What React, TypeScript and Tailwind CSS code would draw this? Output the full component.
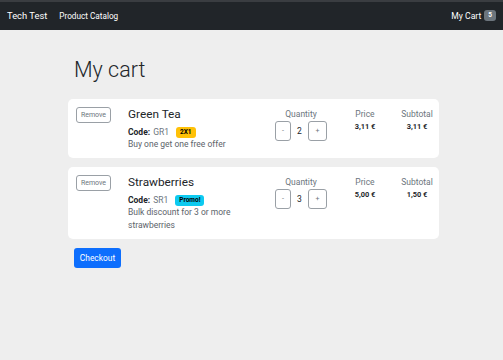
import { ReactNode } from 'react'

type Item = {
  name: string
  code: string
  badge: string
  badgeClass: string
  description: ReactNode
  quantity: number
  price: string
  subtotal: string
}

const items: Item[] = [
  {
    name: 'Green Tea',
    code: 'GR1',
    badge: '2X1',
    badgeClass: 'bg-[#ffc107]',
    description: 'Buy one get one free offer',
    quantity: 2,
    price: '3,11 €',
    subtotal: '3,11 €',
  },
  {
    name: 'Strawberries',
    code: 'SR1',
    badge: 'Promo!',
    badgeClass: 'bg-[#0dcaf0]',
    description: (
      <>
        Bulk discount for 3 or more
        <br />
        strawberries
      </>
    ),
    quantity: 3,
    price: '5,00 €',
    subtotal: '1,50 €',
  },
]

function CartRow({ item }: { item: Item }) {
  return (
    <div className="flex bg-white rounded-[5px] pl-[8px] pr-[4px] pt-[8px] pb-[7px]">
      <div className="w-[52px]">
        <button className="block w-[35px] h-[16px] border border-[#9aa0a6] rounded-[3px] text-[7px] text-[#6c757d] leading-none">
          Remove
        </button>
      </div>
      <div className="flex-1">
        <div className="text-[11.8px] leading-[15px] text-[#212529]">{item.name}</div>
        <div className="flex items-center mt-[4px] h-[12px] text-[8.5px] text-[#6c757d]">
          <span className="font-bold text-[#212529]">Code:</span>
          <span className="ml-[3px]">{item.code}</span>
          <span
            className={`ml-[7px] ${item.badgeClass} rounded-[3px] px-[4px] text-[6.5px] leading-[11px] font-bold text-black`}
          >
            {item.badge}
          </span>
        </div>
        <div className="text-[8.5px] leading-[13px] text-[#5c636a]">{item.description}</div>
      </div>
      <div className="w-[52px] flex flex-col items-center">
        <div className="mt-[1px] text-[8.5px] leading-[12px] text-[#6c757d]">Quantity</div>
        <div className="flex items-center mt-[1px]">
          <button className="w-[16px] h-[20px] border border-[#9aa0a6] rounded-[3px] text-[7px] text-[#6c757d]">
            -
          </button>
          <span className="w-[17px] text-center text-[8.5px] text-[#212529]">{item.quantity}</span>
          <button className="w-[19px] h-[20px] border border-[#9aa0a6] rounded-[3px] text-[7px] text-[#6c757d]">
            +
          </button>
        </div>
      </div>
      <div className="w-[36px] ml-[20px] flex flex-col items-center">
        <div className="mt-[1px] text-[8.5px] leading-[12px] text-[#6c757d]">Price</div>
        <div className="mt-[1px] text-[7.4px] leading-[12px] font-bold text-[#212529]">{item.price}</div>
      </div>
      <div className="w-[36px] ml-[16px] flex flex-col items-center">
        <div className="mt-[1px] text-[8.5px] leading-[12px] text-[#6c757d]">Subtotal</div>
        <div className="mt-[1px] text-[7.4px] leading-[12px] font-bold text-[#212529]">{item.subtotal}</div>
      </div>
    </div>
  )
}

export default function App() {
  return (
    <div className="w-[503px] h-[360px] bg-[#eeeeee] font-['Roboto',sans-serif] overflow-hidden">
      <nav className="h-[30px] bg-[#212529] border-t-2 border-[#3a3d41] flex items-center px-[7px]">
        <span className="text-[9.4px] text-white">Tech Test</span>
        <span className="ml-[12px] text-[8.2px] text-white">Product Catalog</span>
        <div className="ml-auto flex items-center">
          <span className="text-[8.6px] text-white">My Cart</span>
          <span className="ml-[3px] bg-[#6c757d] rounded-[3px] px-[4px] text-[6.5px] leading-[11px] font-bold text-white">
            5
          </span>
        </div>
      </nav>

      <div className="w-[371px] mx-[68px]">
        <h1 className="mt-[26px] ml-[6px] text-[21.5px] leading-[28px] font-light text-[#212529]">My cart</h1>
        <div className="mt-[15px] flex flex-col gap-[9px]">
          {items.map(item => (
            <CartRow key={item.code} item={item} />
          ))}
        </div>
        <button className="block mt-[9px] ml-[6px] w-[47px] h-[20px] bg-[#0d6efd] rounded-[3px] text-[8.4px] text-white">
          Checkout
        </button>
      </div>
    </div>
  )
}
